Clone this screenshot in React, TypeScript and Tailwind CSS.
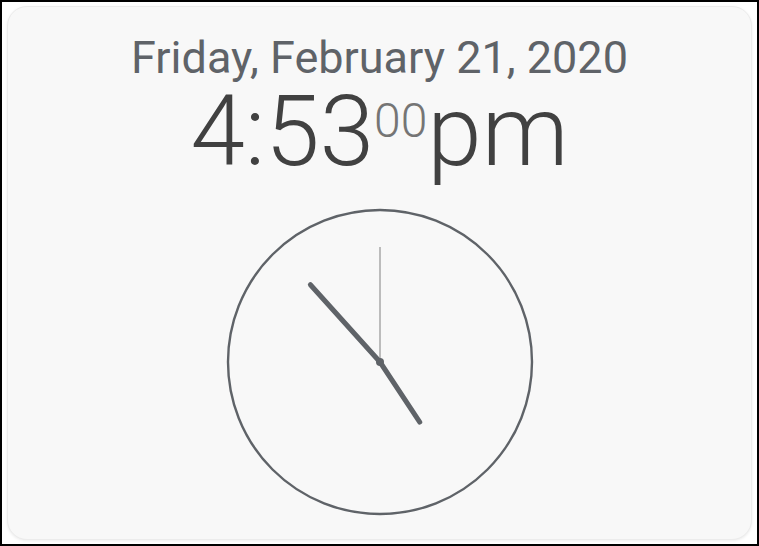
export default function App() {
  const cx = 153;
  const cy = 153;
  const hand = (deg: number, len: number) => {
    const r = (deg * Math.PI) / 180;
    return { x: cx + Math.sin(r) * len, y: cy - Math.cos(r) * len };
  };
  const minute = hand(318, 104);
  const hour = hand(146.5, 72);
  const second = hand(0, 115);

  return (
    <div className="w-[759px] h-[546px] border-2 border-black bg-white p-[4px] pl-[5px] pr-[5px]">
      <div
        className="w-full h-full rounded-[20px] border border-[#ececec] bg-[#f8f8f8] shadow-[0_1px_3px_rgba(0,0,0,0.08)] flex flex-col items-center"
        style={{ fontFamily: "Roboto, 'Noto Sans', sans-serif" }}
      >
        <div className="mt-[24px] text-[45px] leading-[53px] text-[#5f6368]">
          Friday, February 21, 2020
        </div>
        <div className="flex items-start text-[98px] leading-[100px] font-light text-[#414141] -mt-[2px]">
          <span>4:53</span>
          <span className="text-[48px] leading-[48px] mt-[15px] text-[#757575]">00</span>
          <span>pm</span>
        </div>
        <svg width="308" height="308" viewBox="-1 -1 308 308" className="mt-[26px]">
          <circle cx={cx} cy={cy} r={152} fill="none" stroke="#5f6368" strokeWidth={2.4} />
          <line x1={cx} y1={cy} x2={second.x} y2={second.y} stroke="#808080" strokeWidth={1} />
          <line x1={cx} y1={cy} x2={minute.x} y2={minute.y} stroke="#5f6368" strokeWidth={5} strokeLinecap="round" />
          <line x1={cx} y1={cy} x2={hour.x} y2={hour.y} stroke="#5f6368" strokeWidth={5} strokeLinecap="round" />
          <circle cx={cx} cy={cy} r={4} fill="#5f6368" />
        </svg>
      </div>
    </div>
  );
}
